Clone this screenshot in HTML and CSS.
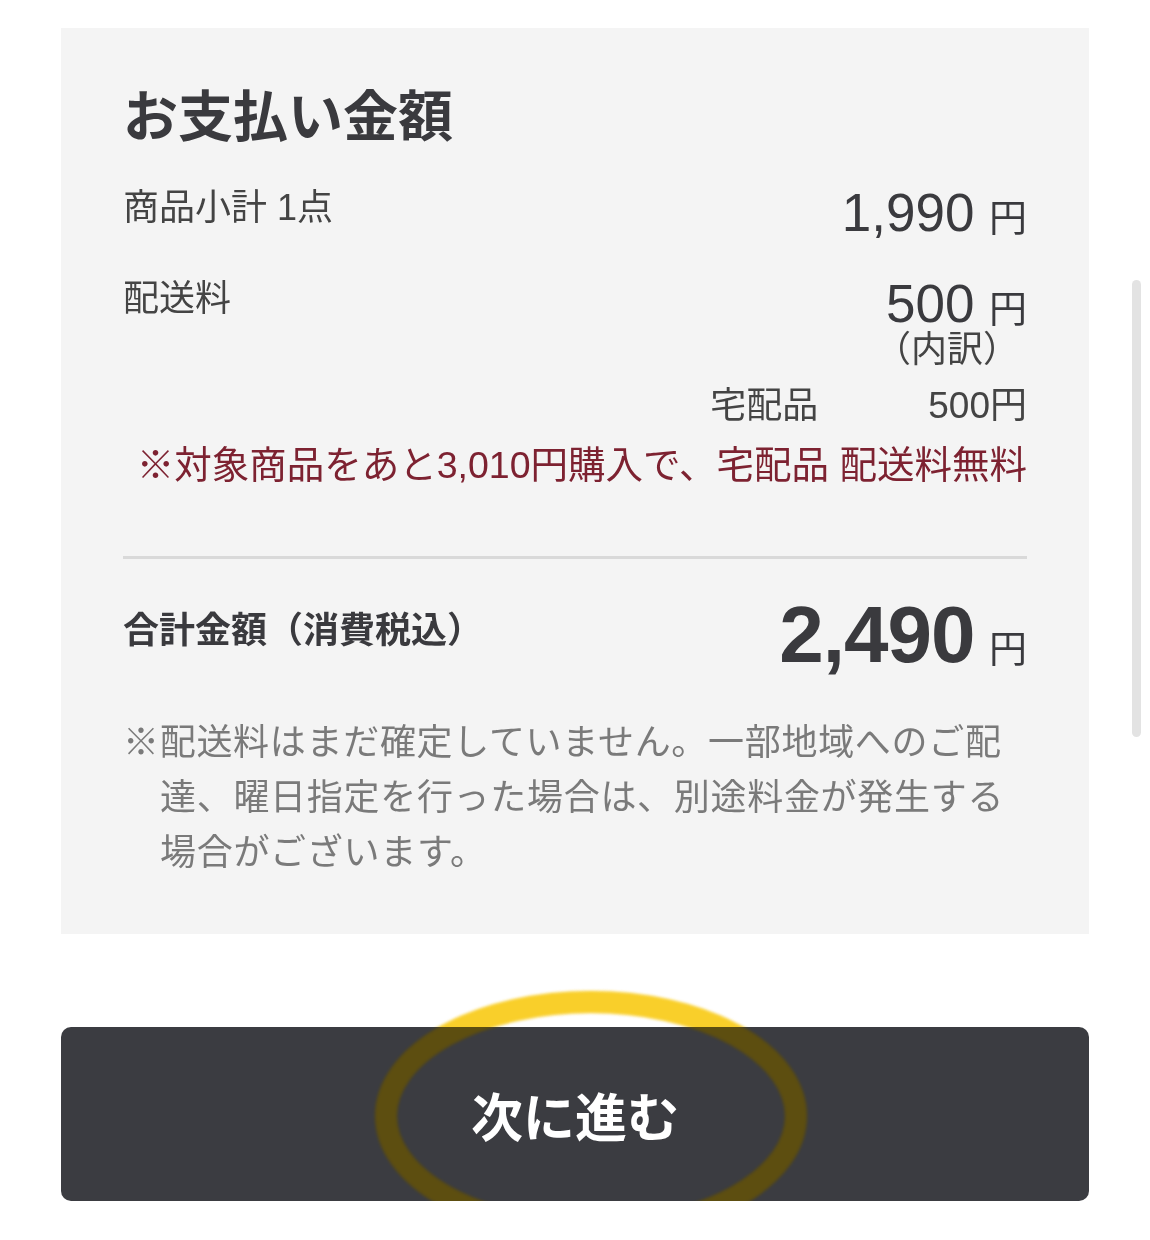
FILE: index.html
```html
<!DOCTYPE html>
<html lang="ja">
<head>
    <meta charset="utf-8">
    <title>お支払い金額</title>
    <link rel="stylesheet" href="styles.css">
</head>
<body>
    <div class="pagina">
        <section class="resumen">
            <h2 class="titulo">お支払い金額</h2>

            <div class="fila fila-subtotal">
                <div class="etiqueta">商品小計 1点</div>
                <div class="monto"><span class="num">1,990</span> <span class="yen">円</span></div>
            </div>

            <div class="fila fila-envio">
                <div class="etiqueta">配送料</div>
                <div class="envio-detalle">
                    <div class="monto"><span class="num">500</span> <span class="yen">円</span></div>
                    <div class="uchiwake">（内訳）</div>
                </div>
            </div>

            <div class="desglose">
                <span class="desglose-nombre">宅配品</span>
                <span class="desglose-precio">500円</span>
            </div>

            <p class="aviso">※対象商品をあと3,010円購入で、宅配品 配送料無料</p>

            <hr class="separador">

            <div class="fila fila-total">
                <div class="etiqueta-total">合計金額（消費税込）</div>
                <div class="monto"><span class="num-total">2,490</span> <span class="yen">円</span></div>
            </div>

            <p class="nota">※配送料はまだ確定していません。一部地域へのご配<br>達、曜日指定を行った場合は、別途料金が発生する<br>場合がございます。</p>
        </section>

        <div class="boton-zona">
            <button class="boton">次に進む</button>
            <!-- marca amarilla sobre el botón -->
            <svg class="marca" width="470" height="280" viewBox="0 0 470 280">
                <ellipse cx="235" cy="140" rx="205" ry="114" fill="none" stroke="#f9cf2a" stroke-width="22"/>
            </svg>
            <svg class="marca marca-luz" width="470" height="280" viewBox="0 0 470 280">
                <ellipse cx="235" cy="140" rx="205" ry="114" fill="none" stroke="#f9cf2a" stroke-width="22"/>
            </svg>
        </div>
    </div>

    <div class="scroll"></div>
</body>
</html>
```

FILE: styles.css
```css
body {
    margin: 0;
    background: #fff;
    font-family: "Liberation Sans", "Noto Sans CJK JP", sans-serif;
    color: #3a3a3e;
    overflow: hidden;
}

.pagina {
    width: 1028px;
    margin-left: 61px;
    padding-top: 28px;
}

/* Bloque gris con el resumen */
.resumen {
    background: #f4f4f4;
    padding: 58px 62px 54px;
}

.titulo {
    margin: 0;
    font-size: 55px;
    line-height: 62px;
    font-weight: 700;
    color: #3a3a3e;
}

.fila {
    display: flex;
    justify-content: space-between;
    align-items: flex-start;
}

.etiqueta {
    font-size: 36px;
    line-height: 40px;
    color: #444;
}

.fila-subtotal {
    margin-top: 40px;
}

.monto {
    font-size: 38px;
    line-height: 50px;
    color: #3a3a3e;
    white-space: nowrap;
}

.num {
    font-size: 53px;
}

.yen {
    margin-left: 4px;
}

.fila-envio {
    margin-top: 36px;
}

.envio-detalle {
    display: flex;
    flex-direction: column;
    align-items: flex-end;
}

.envio-detalle .monto {
    line-height: 44px;
    padding-top: 3px;
}

.uchiwake {
    font-size: 36px;
    line-height: 37px;
    margin-right: 8px;
    color: #444;
}

.desglose {
    display: flex;
    justify-content: flex-end;
    margin-top: 18px;
    font-size: 37px;
    line-height: 40px;
    color: #444;
}

.desglose-nombre {
    font-size: 36px;
}

.desglose-precio {
    margin-left: 110px;
}

.aviso {
    margin: 18px 0 0;
    text-align: right;
    font-size: 37.5px;
    line-height: 42px;
    color: #7d2231;
}

.separador {
    border: 0;
    border-top: 3px solid #d9d9d9;
    margin: 70px 0 0;
}

.fila-total {
    margin-top: 34px;
}

.etiqueta-total {
    margin-top: 18px;
    font-size: 36px;
    line-height: 40px;
    font-weight: 700;
    color: #3a3a3e;
}

.num-total {
    font-size: 80px;
    font-weight: 700;
    letter-spacing: -1px;
}

.fila-total .monto {
    line-height: 84px;
}

.nota {
    margin: 24px 0 0;
    padding-left: 37px;
    text-indent: -37px;
    font-size: 36px;
    letter-spacing: 0.7px;
    line-height: 55px;
    color: #7a7a7a;
}

/* Botón */
.boton-zona {
    position: relative;
    margin-top: 93px;
}

.boton {
    display: block;
    width: 100%;
    height: 174px;
    border: 0;
    border-radius: 10px;
    background: #3b3c41;
    color: #fff;
    font-family: "Liberation Sans", "Noto Sans CJK JP", sans-serif;
    font-size: 52px;
    font-weight: 700;
}

.marca {
    position: absolute;
    left: 295px;
    top: -51px;
    mix-blend-mode: multiply;
    pointer-events: none;
    filter: blur(1.5px);
}

.marca-luz {
    mix-blend-mode: normal;
    opacity: 0.18;
}

/* Barra de desplazamiento de la vista */
.scroll {
    position: fixed;
    left: 1132px;
    top: 280px;
    width: 9px;
    height: 457px;
    border-radius: 5px;
    background: #e3e3e3;
}
```
